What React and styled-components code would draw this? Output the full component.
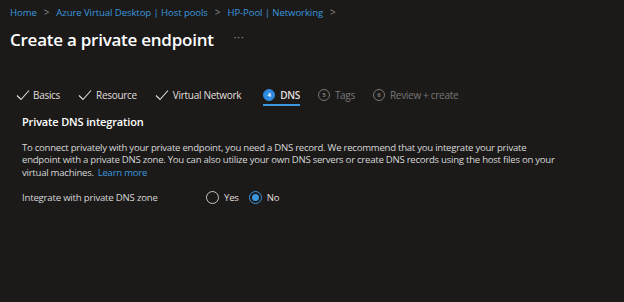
import React from 'react'
import styled, { createGlobalStyle } from 'styled-components'

const GlobalStyle = createGlobalStyle`
  html, body {
    margin: 0;
    padding: 0;
    background: #1b1a19;
  }
  body {
    font-family: 'Open Sans', 'Noto Sans', sans-serif;
    color: #d6d6d6;
  }
`

const Page = styled.div`
  width: 624px;
  height: 302px;
  background: #1b1a19;
  padding: 5px 0 0 10px;
  box-sizing: border-box;
  overflow: hidden;
`

const Breadcrumb = styled.nav`
  display: flex;
  align-items: center;
  gap: 7px;
  font-size: 9.6px;
  letter-spacing: -0.1px;
  line-height: 15px;
  height: 15px;
`

const Crumb = styled.a`
  color: #3a96dd;
  text-decoration: none;
`

const Chevron = styled.span`
  color: #8a8886;
  font-size: 10px;
`

const TitleRow = styled.div`
  display: flex;
  align-items: center;
  gap: 20px;
  margin-top: 7px;
  height: 24px;
`

const Title = styled.h1`
  margin: 0;
  font-size: 17px;
  font-weight: 600;
  color: #ffffff;
  letter-spacing: -0.25px;
`

const More = styled.span`
  color: #a19f9d;
  font-size: 10px;
  letter-spacing: 1px;
  margin-top: -4px;
`

const Tabs = styled.div`
  display: flex;
  align-items: stretch;
  margin-top: 33px;
  padding-left: 6px;
  height: 22px;
`

const Tab = styled.div`
  display: flex;
  align-items: center;
  gap: ${({ $iconGap }) => $iconGap || 4}px;
  margin-right: ${({ $gap }) => $gap}px;
  font-size: 10px;
  letter-spacing: -0.3px;
  color: ${({ $muted }) => ($muted ? '#797775' : '#e1dfdd')};
  font-weight: ${({ $active }) => ($active ? 600 : 400)};
  border-bottom: 2px solid ${({ $active }) => ($active ? '#3a96dd' : 'transparent')};
  box-sizing: border-box;
  padding-top: 2px;
`

const StepNum = styled.span`
  width: 12px;
  height: 12px;
  border-radius: 50%;
  box-sizing: border-box;
  display: inline-flex;
  align-items: center;
  justify-content: center;
  font-size: 6px;
  font-weight: 700;
  letter-spacing: 0;
  line-height: 1;
  background: ${({ $active }) => ($active ? '#2f8be0' : 'transparent')};
  border: 1px solid ${({ $active }) => ($active ? '#2f8be0' : '#797775')};
  color: ${({ $active }) => ($active ? '#ffffff' : '#797775')};
`

const Section = styled.section`
  padding-left: 12px;
  margin-top: 8px;
`

const SectionTitle = styled.h2`
  margin: 0;
  font-size: 11px;
  font-weight: 600;
  color: #ffffff;
  letter-spacing: -0.15px;
  line-height: 16px;
`

const Body = styled.p`
  margin: 12px 0 0;
  font-size: 9.6px;
  letter-spacing: -0.26px;
  line-height: 12.4px;
  color: #d6d6d6;
`

const Link = styled.a`
  color: #3a96dd;
  text-decoration: none;
  margin-left: 4px;
`

const FieldRow = styled.div`
  display: flex;
  align-items: center;
  margin-top: 12px;
  font-size: 9.6px;
  letter-spacing: -0.2px;
`

const FieldLabel = styled.span`
  width: 184px;
  color: #d6d6d6;
`

const RadioGroup = styled.div`
  display: flex;
  align-items: center;
  gap: 10px;
`

const RadioOption = styled.label`
  display: flex;
  align-items: center;
  gap: 5px;
  color: #e1dfdd;
`

const RadioCircle = styled.span`
  width: 13px;
  height: 13px;
  box-sizing: border-box;
  border-radius: 50%;
  border: 1px solid ${({ $checked }) => ($checked ? '#3a96dd' : '#c8c6c4')};
  display: inline-flex;
  align-items: center;
  justify-content: center;

  &::after {
    content: '';
    width: 7px;
    height: 7px;
    border-radius: 50%;
    background: ${({ $checked }) => ($checked ? '#3a96dd' : 'transparent')};
  }
`

const Check = () => (
  <svg width="14" height="12" viewBox="0 0 14 12" fill="none">
    <polyline points="1,6.5 5,10.5 13,1.5" stroke="#e1dfdd" strokeWidth="1.1" />
  </svg>
)

const App = () => {
  return (
    <Page>
      <GlobalStyle />
      <Breadcrumb>
        <Crumb>Home</Crumb>
        <Chevron>&gt;</Chevron>
        <Crumb>Azure Virtual Desktop | Host pools</Crumb>
        <Chevron>&gt;</Chevron>
        <Crumb>HP-Pool | Networking</Crumb>
        <Chevron>&gt;</Chevron>
      </Breadcrumb>
      <TitleRow>
        <Title>Create a private endpoint</Title>
        <More>···</More>
      </TitleRow>
      <Tabs>
        <Tab $gap={18} $iconGap={3}>
          <Check />
          Basics
        </Tab>
        <Tab $gap={18}>
          <Check />
          Resource
        </Tab>
        <Tab $gap={22}>
          <Check />
          Virtual Network
        </Tab>
        <Tab $gap={18} $active $iconGap={5}>
          <StepNum $active>4</StepNum>
          DNS
        </Tab>
        <Tab $gap={18} $muted $iconGap={5}>
          <StepNum>5</StepNum>
          Tags
        </Tab>
        <Tab $muted $iconGap={5}>
          <StepNum>6</StepNum>
          Review + create
        </Tab>
      </Tabs>
      <Section>
        <SectionTitle>Private DNS integration</SectionTitle>
        <Body>
          To connect privately with your private endpoint, you need a DNS record. We recommend that you integrate your private
          <br />
          endpoint with a private DNS zone. You can also utilize your own DNS servers or create DNS records using the host files on your
          <br />
          virtual machines.
          <Link>Learn more</Link>
        </Body>
        <FieldRow>
          <FieldLabel>Integrate with private DNS zone</FieldLabel>
          <RadioGroup>
            <RadioOption>
              <RadioCircle />
              Yes
            </RadioOption>
            <RadioOption>
              <RadioCircle $checked />
              No
            </RadioOption>
          </RadioGroup>
        </FieldRow>
      </Section>
    </Page>
  )
}

export default App
